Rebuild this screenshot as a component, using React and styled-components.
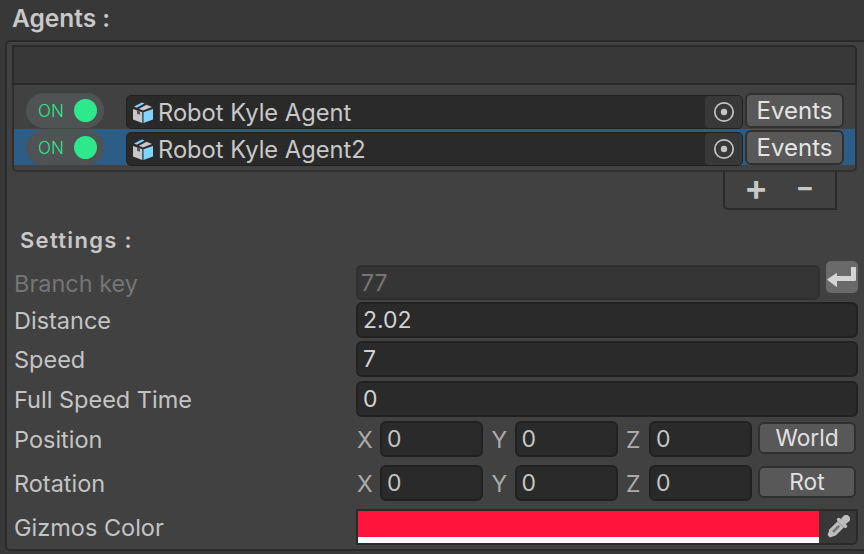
import styled, { createGlobalStyle } from "styled-components";

const GlobalStyle = createGlobalStyle`
  html, body {
    margin: 0;
    padding: 0;
    height: 554px;
    overflow: hidden;
    background: #383838;
    font-family: Inter, "Noto Sans", sans-serif;
  }
`;

const CubeIcon = () => (
  <svg width="20" height="21" viewBox="0 0 20 21">
    <path d="M0 7l9.300 3.200V21L0 17.400z" fill="#c8c8c8" />
    <path d="M4 8.400l3 1v3.300l-3-1z" fill="#555" />
    <path d="M10.500 10.200L20 7v10.400L10.500 21z" fill="#80d4ff" />
    <path d="M1 4.600L9 .6l2.500 1L3.800 5.800z" fill="#80d4ff" />
    <path d="M5.800 6.800L13.500 2.800 19 5l-9 3.600z" fill="#c8c8c8" />
  </svg>
);

const TargetIcon = () => (
  <svg width="22" height="22" viewBox="0 0 22 22">
    <circle cx="11" cy="11" r="9.200" fill="none" stroke="#c4c4c4" strokeWidth="1.700" />
    <circle cx="11" cy="11" r="3.200" fill="#c4c4c4" />
  </svg>
);

const ReturnIcon = () => (
  <svg width="32" height="32" viewBox="0 0 32 32">
    <path
      d="M25 6.500q0-.5.500-.5h4q.5 0 .5.500V19q0 1-1 1H11v5.500q0 .7-.700.300L1.500 19q-.6-.5 0-1l8.800-5.800q.7-.4.700.300V15h14z"
      fill="#d4d4d4"
    />
  </svg>
);

const PipetteIcon = () => (
  <svg width="24" height="24" viewBox="0 0 22 22">
    <g transform="rotate(45 11 11)">
      <rect x="7.500" y="-3" width="7" height="8" rx="3" fill="#bdbdbd" />
      <rect x="5" y="4" width="12" height="3.500" rx="1.700" fill="#bdbdbd" />
      <path d="M7 7.500h8V18l-2.500 5h-3L7 18z" fill="#bdbdbd" />
      <path d="M9.800 9.500h2.400v8h-2.400z" fill="#777" />
    </g>
  </svg>
);

const agents = ["Robot Kyle Agent", "Robot Kyle Agent2"];

const Vector3 = ({ mode }) => (
  <Vector>
    <Axis>X</Axis>
    <AxisField>0</AxisField>
    <Axis>Y</Axis>
    <AxisField>0</AxisField>
    <Axis>Z</Axis>
    <AxisField>0</AxisField>
    <ModeButton>{mode}</ModeButton>
  </Vector>
);

export default function App() {
  return (
    <>
      <GlobalStyle />
      <Page>
        <Title>Agents :</Title>
        <Panel>
          <ListHeader />
          <List>
            {agents.map((name, i) => (
              <AgentRow key={name} $selected={i === 1}>
                <Toggle>
                  <ToggleLabel>ON</ToggleLabel>
                  <Knob />
                </Toggle>
                <ObjectField>
                  <CubeIcon />
                  <ObjectName>{name}</ObjectName>
                  <PickerButton>
                    <TargetIcon />
                  </PickerButton>
                </ObjectField>
                <EventsButton>Events</EventsButton>
              </AgentRow>
            ))}
          </List>
          <FooterRow>
            <AddRemove>
              <Plus>+</Plus>
              <Minus>−</Minus>
            </AddRemove>
          </FooterRow>
          <SectionTitle>Settings :</SectionTitle>
          <Rows>
            <BranchRow $h={37}>
              <DimLabel>Branch key</DimLabel>
              <DisabledField>77</DisabledField>
              <ReturnButton>
                <ReturnIcon />
              </ReturnButton>
            </BranchRow>
            <Row $h={39}>
              <Label>Distance</Label>
              <Field>2.02</Field>
            </Row>
            <Row $h={40}>
              <Label>Speed</Label>
              <Field>7</Field>
            </Row>
            <Row $h={40}>
              <Label>Full Speed Time</Label>
              <Field>0</Field>
            </Row>
            <Row $h={44}>
              <Label>Position</Label>
              <Vector3 mode="World" />
            </Row>
            <Row $h={44}>
              <Label>Rotation</Label>
              <Vector3 mode="Rot" />
            </Row>
            <Row $h={36}>
              <Label>Gizmos Color</Label>
              <ColorField>
                <Swatch>
                  <SwatchColor />
                  <SwatchAlpha />
                </Swatch>
                <PipetteBox>
                  <PipetteIcon />
                </PipetteBox>
              </ColorField>
            </Row>
          </Rows>
        </Panel>
      </Page>
    </>
  );
}

const Page = styled.div`
  width: 864px;
  height: 554px;
  padding-left: 5px;
  box-sizing: border-box;
  color: #c4c4c4;
  overflow: hidden;
`;

const Title = styled.div`
  height: 40px;
  padding: 3px 0 0 7px;
  box-sizing: border-box;
  font-size: 24.500px;
  font-weight: 600;
  line-height: 30px;
  color: #c8c8c8;
`;

const Panel = styled.div`
  width: 865px;
  height: 511px;
  box-sizing: border-box;
  padding: 3px 11px 0 5px;
  background: #414141;
  border: 2px solid #2a2a2a;
  border-radius: 5px;
`;

const ListHeader = styled.div`
  height: 40px;
  box-sizing: border-box;
  background: #383838;
  border: 2px solid #2a2a2a;
  border-radius: 0 5px 0 0;
`;

const List = styled.div`
  height: 87px;
  box-sizing: border-box;
  padding-top: 8px;
  background: #414141;
  border: 2px solid #2f2f2f;
  border-top: none;
  border-radius: 0 0 5px 5px;
`;

const AgentRow = styled.div`
  height: 36px;
  box-sizing: border-box;
  display: flex;
  align-items: flex-start;
  padding: ${(p) => (p.$selected ? "1px" : "0")} 11px 0 12px;
  background: ${(p) => (p.$selected ? "#2c5d87" : "transparent")};
`;

const Toggle = styled.div`
  width: 78px;
  height: 35px;
  flex: none;
  box-sizing: border-box;
  display: flex;
  align-items: center;
  justify-content: space-between;
  padding: 0 7px 0 12px;
  border-radius: 18px;
  background: #4f5354;
  margin-right: 22px;
`;

const ToggleLabel = styled.span`
  font-size: 17px;
  font-weight: 300;
  line-height: 20px;
  color: #2ee88c;
`;

const Knob = styled.span`
  width: 23px;
  height: 23px;
  border-radius: 50%;
  background: #2ee88c;
`;

const ObjectField = styled.div`
  flex: 1;
  height: 34px;
  margin: 2px 2px 0 0;
  box-sizing: border-box;
  display: flex;
  align-items: center;
  gap: 5px;
  padding-left: 6px;
  background: #2a2a2a;
  border: 1px solid #212121;
  border-radius: 5px;
`;

const ObjectName = styled.span`
  flex: 1;
  padding-top: 2px;
  font-size: 23.700px;
  line-height: 30px;
  color: #c8c8c8;
`;

const PickerButton = styled.div`
  width: 37px;
  height: 32px;
  display: flex;
  align-items: center;
  justify-content: center;
  background: #383838;
  border-radius: 4px;
`;

const EventsButton = styled.div`
  width: 99px;
  height: 35px;
  box-sizing: border-box;
  flex: none;
  text-align: center;
  font-size: 24px;
  line-height: 32px;
  color: #e4e4e4;
  background: #585858;
  border: 2px solid #303030;
  border-radius: 6px;
`;

const FooterRow = styled.div`
  display: flex;
  justify-content: flex-end;
  padding-right: 20px;
`;

const AddRemove = styled.div`
  width: 114px;
  height: 38px;
  box-sizing: border-box;
  display: flex;
  align-items: center;
  gap: 30px;
  padding: 0 0 6px 19px;
  background: #414141;
  border: 2px solid #2a2a2a;
  border-top: none;
  border-radius: 0 0 0 5px;
  font-weight: 600;
`;

const Plus = styled.span`
  width: 20px;
  text-align: center;
  font-size: 36px;
  line-height: 32px;
  color: #c8c8c8;
`;

const Minus = styled(Plus)`
  margin-left: 1px;
  font-size: 28px;
`;

const SectionTitle = styled.div`
  height: 55px;
  padding: 15px 0 0 8px;
  box-sizing: border-box;
  font-size: 22px;
  letter-spacing: 1.300px;
  font-weight: 600;
  line-height: 30px;
  color: #c8c8c8;
`;

const Rows = styled.div`
  display: flex;
  flex-direction: column;
  margin: 0 -1px 0 2px;
`;

const Row = styled.div`
  display: grid;
  grid-template-columns: 342px 1fr;
  align-items: start;
  height: ${(p) => p.$h}px;
`;

const BranchRow = styled(Row)`
  grid-template-columns: 342px 464px 1fr;
`;

const Label = styled.div`
  margin-top: 4px;
  font-size: 23.500px;
  line-height: 30px;
  color: #c4c4c4;
`;

const DimLabel = styled(Label)`
  color: #757575;
`;

const Field = styled.div`
  height: 36px;
  box-sizing: border-box;
  padding-left: 5px;
  font-size: 23px;
  line-height: 33px;
  color: #d2d2d2;
  background: #2a2a2a;
  border: 2px solid #212121;
  border-radius: 6px;
`;

const DisabledField = styled(Field)`
  height: 35px;
  padding-left: 3px;
  color: #757575;
  background: #353535;
  border-color: #2f2f2f;
`;

const ReturnButton = styled.div`
  width: 32px;
  height: 32px;
  margin: -4px 0 0 6px;
  background: #6a6a6a;
  border-radius: 5px;
`;

const Vector = styled.div`
  display: flex;
  align-items: flex-start;
`;

const Axis = styled.span`
  width: 24px;
  padding: 4px 0 0 1px;
  box-sizing: border-box;
  font-size: 23px;
  line-height: 30px;
  color: #ababab;
`;

const AxisField = styled.div`
  width: 103px;
  height: 36px;
  box-sizing: border-box;
  padding-left: 5px;
  margin-right: 7.500px;
  font-size: 23px;
  line-height: 33px;
  color: #c4c4c4;
  background: #2a2a2a;
  border: 2px solid #212121;
  border-radius: 6px;
`;

const ModeButton = styled.div`
  width: 98px;
  height: 32px;
  flex: none;
  margin: 1px 0 0 -1.500px;
  box-sizing: border-box;
  text-align: center;
  font-size: 22.700px;
  line-height: 28px;
  color: #e0e0e0;
  background: #585858;
  border: 2px solid #303030;
  border-radius: 6px;
`;

const ColorField = styled.div`
  height: 36px;
  box-sizing: border-box;
  display: flex;
  background: #383838;
  border: 2px solid #2a2a2a;
  border-radius: 0 0 6px 0;
`;

const Swatch = styled.div`
  flex: 1;
  display: flex;
  flex-direction: column;
`;

const SwatchColor = styled.div`
  flex: 1;
  background: #ff143c;
`;

const SwatchAlpha = styled.div`
  height: 6px;
  background: #fff;
`;

const PipetteBox = styled.div`
  width: 37px;
  display: flex;
  align-items: center;
  justify-content: center;
`;
